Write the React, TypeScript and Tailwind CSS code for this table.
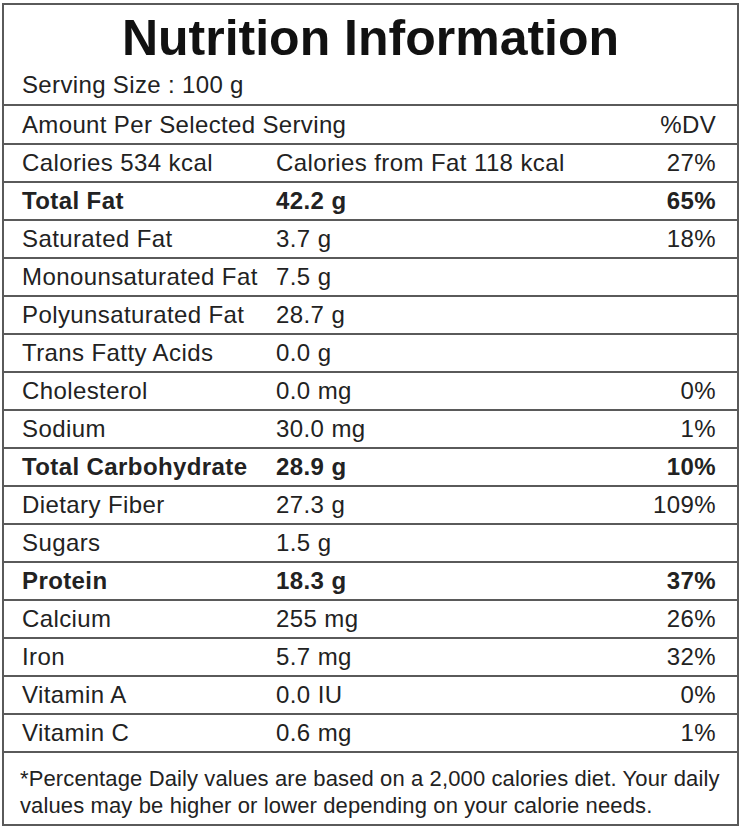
import React from 'react';

interface NutrientRow {
  name: string;
  amount: string;
  dv: string;
  bold?: boolean;
}

const rows: NutrientRow[] = [
  { name: 'Total Fat', amount: '42.2 g', dv: '65%', bold: true },
  { name: 'Saturated Fat', amount: '3.7 g', dv: '18%' },
  { name: 'Monounsaturated Fat', amount: '7.5 g', dv: '' },
  { name: 'Polyunsaturated Fat', amount: '28.7 g', dv: '' },
  { name: 'Trans Fatty Acids', amount: '0.0 g', dv: '' },
  { name: 'Cholesterol', amount: '0.0 mg', dv: '0%' },
  { name: 'Sodium', amount: '30.0 mg', dv: '1%' },
  { name: 'Total Carbohydrate', amount: '28.9 g', dv: '10%', bold: true },
  { name: 'Dietary Fiber', amount: '27.3 g', dv: '109%' },
  { name: 'Sugars', amount: '1.5 g', dv: '' },
  { name: 'Protein', amount: '18.3 g', dv: '37%', bold: true },
  { name: 'Calcium', amount: '255 mg', dv: '26%' },
  { name: 'Iron', amount: '5.7 mg', dv: '32%' },
  { name: 'Vitamin A', amount: '0.0 IU', dv: '0%' },
  { name: 'Vitamin C', amount: '0.6 mg', dv: '1%' },
];

function Row({ row }: { row: NutrientRow }) {
  return (
    <div
      className={`flex h-[38px] items-center border-b-2 border-[#5a5a5a] pl-[18px] pr-[21px] text-[24px] leading-none tracking-[0.4px] ${
        row.bold ? 'font-bold' : ''
      }`}
    >
      <span className="w-[254px] shrink-0 whitespace-nowrap">{row.name}</span>
      <span className="flex-1 whitespace-nowrap">{row.amount}</span>
      <span className="whitespace-nowrap">{row.dv}</span>
    </div>
  );
}

export default function App() {
  return (
    <div className="min-h-screen bg-white pl-[2px] pt-[3px]">
      <div
        className="w-[737px] border-2 border-[#5a5a5a] text-[#222]"
        style={{ fontFamily: '"Liberation Sans", Arial, sans-serif' }}
      >
        {/* header */}
        <div className="h-[101px] border-b-2 border-[#5a5a5a] pt-[8px]">
          <h1 className="text-center text-[50px] font-bold leading-none text-[#111]">
            Nutrition Information
          </h1>
          <div className="mt-[10px] pl-[18px] text-[24px] leading-none tracking-[0.35px]">
            Serving Size : 100 g
          </div>
        </div>

        <div className="flex h-[39px] items-center justify-between border-b-2 border-[#5a5a5a] pl-[18px] pr-[21px] text-[24px] leading-none tracking-[0.35px]">
          <span>Amount Per Selected Serving</span>
          <span>%DV</span>
        </div>

        <div className="flex h-[38px] items-center border-b-2 border-[#5a5a5a] pl-[18px] pr-[21px] text-[24px] leading-none tracking-[0.4px]">
          <span className="w-[254px] shrink-0 whitespace-nowrap">Calories 534 kcal</span>
          <span className="flex-1 whitespace-nowrap">Calories from Fat 118 kcal</span>
          <span>27%</span>
        </div>

        {rows.map((r) => (
          <Row key={r.name} row={r} />
        ))}

        {/* footnote */}
        <div className="h-[71px] pl-[16px] pr-[10px] pt-[12px] text-[22px] leading-[27px] tracking-[0.12px]">
          *Percentage Daily values are based on a 2,000 calories diet. Your daily values may be
          higher or lower depending on your calorie needs.
        </div>
      </div>
    </div>
  );
}
